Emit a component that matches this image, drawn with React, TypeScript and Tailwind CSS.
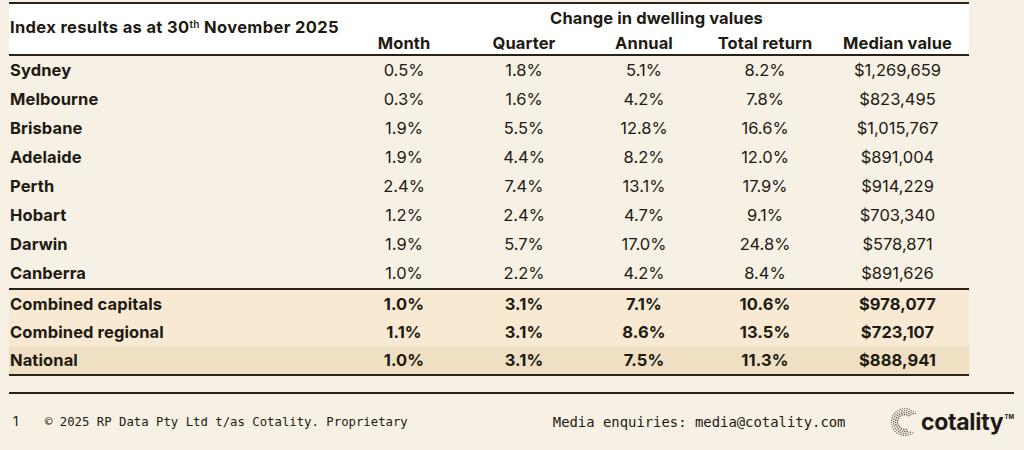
const rows = [
  ['Sydney', '0.5%', '1.8%', '5.1%', '8.2%', '$1,269,659'],
  ['Melbourne', '0.3%', '1.6%', '4.2%', '7.8%', '$823,495'],
  ['Brisbane', '1.9%', '5.5%', '12.8%', '16.6%', '$1,015,767'],
  ['Adelaide', '1.9%', '4.4%', '8.2%', '12.0%', '$891,004'],
  ['Perth', '2.4%', '7.4%', '13.1%', '17.9%', '$914,229'],
  ['Hobart', '1.2%', '2.4%', '4.7%', '9.1%', '$703,340'],
  ['Darwin', '1.9%', '5.7%', '17.0%', '24.8%', '$578,871'],
  ['Canberra', '1.0%', '2.2%', '4.2%', '8.4%', '$891,626'],
];

const summary = [
  ['Combined capitals', '1.0%', '3.1%', '7.1%', '10.6%', '$978,077'],
  ['Combined regional', '1.1%', '3.1%', '8.6%', '13.5%', '$723,107'],
];

const national = ['National', '1.0%', '3.1%', '7.5%', '11.3%', '$888,941'];

const cols = 'grid grid-cols-[335px_120px_120px_120px_122px_143px]';

function Row({ cells, bold, height, bg }: { cells: string[]; bold?: boolean; height: string; bg?: string }) {
  return (
    <div className={`${cols} ${height} ${bg ?? ''} items-center`}>
      <div className="pl-[1px] font-bold tracking-[0.1px]">{cells[0]}</div>
      {cells.slice(1).map((c, i) => (
        <div key={i} className={`text-center ${bold ? 'font-bold' : 'font-normal'}`}>
          {c}
        </div>
      ))}
    </div>
  );
}

function CotalityMark() {
  // dotted "C": a band of fine dots along arcs, open on the right,
  // the upper end sweeping further round than the lower one
  const dots: { x: number; y: number; r: number }[] = [];
  const cx = 15;
  const cy = 16;
  const bands = [13.5, 11.5, 9.5, 7.5];
  bands.forEach((r, k) => {
    const start = 40 + k * 6;
    const end = 305 - k * 4;
    const step = 2.4 / r;
    for (let a = (start * Math.PI) / 180; a <= (end * Math.PI) / 180; a += step) {
      dots.push({ x: cx + Math.cos(a) * r, y: cy - Math.sin(a) * r, r: 0.6 + k * 0.05 });
    }
  });
  return (
    <svg width="30" height="33" viewBox="0 0 30 33" className="shrink-0">
      {dots.map((d, i) => (
        <circle key={i} cx={d.x} cy={d.y} r={d.r} fill="#4a4037" />
      ))}
    </svg>
  );
}

export default function App() {
  return (
    <div className="h-[450px] w-[1024px] overflow-hidden bg-[#f7f0e4] font-['Inter',sans-serif] text-[#211a12]">
      <div className="ml-[9px] w-[960px] pt-[2px]">
        <div className="border-y-2 border-[#2a2219] bg-white">
          <div className={`${cols} h-[50px] items-stretch`}>
            <div className="flex items-center pb-[4px] pl-[1px] text-[16.5px] font-bold tracking-[0.35px]">
              <span>
                Index results as at 30<sup className="text-[10px] font-semibold">th</sup> November 2025
              </span>
            </div>
            <div className="col-span-5 grid grid-cols-[120px_120px_120px_122px_143px] grid-rows-[27px_23px] text-[16.5px] font-bold tracking-[0.1px]">
              <div className="col-span-5 flex items-center justify-center pt-[2px]">Change in dwelling values</div>
              <div className="text-center">Month</div>
              <div className="text-center">Quarter</div>
              <div className="text-center">Annual</div>
              <div className="text-center">Total return</div>
              <div className="text-center">Median value</div>
            </div>
          </div>
        </div>
        <div className="text-[16.5px] tracking-[0px]">
          {rows.map((r) => (
            <Row key={r[0]} cells={r} height="h-[29px]" />
          ))}
        </div>
        <div className="border-y-2 border-[#2a2219] text-[16.5px] tracking-[0.1px]">
          {summary.map((r) => (
            <Row key={r[0]} cells={r} bold height="h-[28px]" bg="bg-[#f8e9d3]" />
          ))}
          <Row cells={national} bold height="h-[28px]" bg="bg-[#efdfc3]" />
        </div>
      </div>
      <div className="ml-[9px] mt-[16px] w-[1005px] border-t-2 border-[#2a2219]" />
      <div className="flex h-[56px] items-center pl-[13px] pr-[10px]">
        <span className="w-[32px] text-[13px]">1</span>
        <span className="font-['DejaVu_Sans_Mono',monospace] text-[12.3px]">
          © 2025 RP Data Pty Ltd t/as Cotality. Proprietary
        </span>
        <span className="ml-[145px] font-['DejaVu_Sans_Mono',monospace] text-[13.9px]">
          Media enquiries: media@cotality.com
        </span>
        <div className="ml-auto flex items-center">
          <CotalityMark />
          <span className="ml-[1px] text-[23px] font-bold leading-none tracking-[-0.3px] text-[#1f1a14]">cotality</span>
          <span className="mb-[12px] ml-[1px] text-[6px] font-bold">TM</span>
        </div>
      </div>
    </div>
  );
}
